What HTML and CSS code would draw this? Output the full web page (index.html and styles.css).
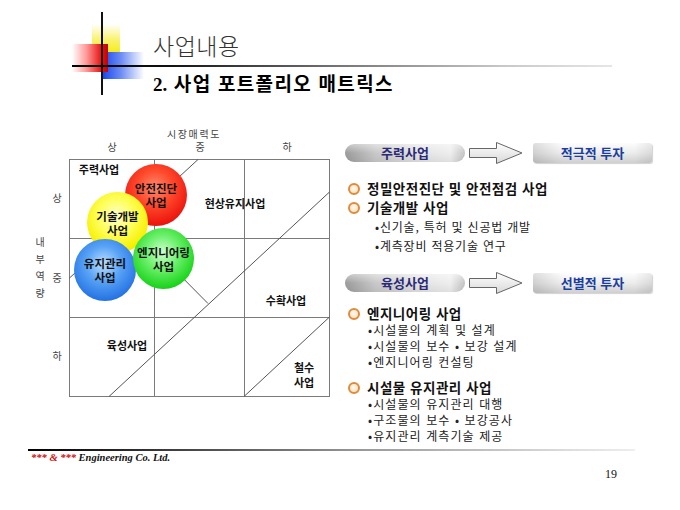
FILE: index.html
```html
<!DOCTYPE html>
<html lang="ko">
<head>
<meta charset="utf-8">
<title>사업내용</title>
<link rel="stylesheet" href="styles.css">
</head>
<body>
<div class="slide">
  <header class="head">
    <div class="mark">
      <div class="sq sq-yellow"></div>
      <div class="sq sq-blue"></div>
      <div class="sq sq-red"></div>
      <div class="vline"></div>
    </div>
    <h1 class="title">사업내용</h1>
    <div class="rule"></div>
    <h2 class="subtitle"><span class="num">2.</span> 사업 포트폴리오 매트릭스</h2>
  </header>

  <main class="content">
    <section class="matrix">
      <svg class="grid" width="340" height="290" viewBox="0 0 340 290">
        <g stroke="#7a7a7a" stroke-width="1" fill="none">
          <rect x="69.5" y="39.5" width="260" height="237"/>
          <line x1="154.5" y1="39.5" x2="154.5" y2="276.5"/>
          <line x1="244.5" y1="39.5" x2="244.5" y2="276.5"/>
          <line x1="69.5" y1="118.5" x2="329.5" y2="118.5"/>
          <line x1="69.5" y1="197.5" x2="329.5" y2="197.5"/>
        </g>
        <g stroke="#555" stroke-width="1" fill="none">
          <line x1="198" y1="39.5" x2="69.5" y2="158"/>
          <line x1="109" y1="276.5" x2="329.5" y2="72"/>
          <line x1="244" y1="276.5" x2="329.5" y2="197"/>
          <line x1="208" y1="183.5" x2="160" y2="135"/>
        </g>
      </svg>

      <div class="lbl ax-title">시장매력도</div>
      <div class="lbl ax ax-hi">상</div>
      <div class="lbl ax ax-mid">중</div>
      <div class="lbl ax ax-lo">하</div>
      <div class="lbl ax ay-hi">상</div>
      <div class="lbl ax ay-mid">중</div>
      <div class="lbl ax ay-lo">하</div>
      <div class="lbl ay-title">내<br>부<br>역<br>량</div>

      <div class="lbl quad q-main">주력사업</div>
      <div class="lbl quad q-hold">현상유지사업</div>
      <div class="lbl quad q-harvest">수확사업</div>
      <div class="lbl quad q-grow">육성사업</div>
      <div class="lbl quad q-exit">철수<br>사업</div>

      <div class="ball ball-red">안전진단<br>사업</div>
      <div class="ball ball-yellow">기술개발<br>사업</div>
      <div class="ball ball-blue">유지관리<br>사업</div>
      <div class="ball ball-green">엔지니어링<br>사업</div>
    </section>

    <section class="panel">
      <div class="action">
        <div class="pill">주력사업</div>
        <svg class="arrow" width="56" height="24" viewBox="0 0 56 24">
          <defs>
            <linearGradient id="ag1" x1="0" y1="0" x2="0" y2="1">
              <stop offset="0" stop-color="#ffffff"/>
              <stop offset="1" stop-color="#d8d8d8"/>
            </linearGradient>
          </defs>
          <polygon points="1.5,7.5 28.5,7.5 28.5,1.5 54,12 28.5,22.5 28.5,16.5 1.5,16.5" fill="url(#ag1)" stroke="#666" stroke-width="1"/>
        </svg>
        <div class="target">적극적 투자</div>
      </div>
      <ul class="group g1">
        <li class="item"><span class="dot"></span>정밀안전진단 및 안전점검 사업</li>
        <li class="item"><span class="dot"></span>기술개발 사업</li>
        <li class="sub">•신기술, 특허 및 신공법 개발</li>
        <li class="sub">•계측장비 적용기술 연구</li>
      </ul>

      <div class="action action-2">
        <div class="pill">육성사업</div>
        <svg class="arrow" width="56" height="24" viewBox="0 0 56 24">
          <defs>
            <linearGradient id="ag2" x1="0" y1="0" x2="0" y2="1">
              <stop offset="0" stop-color="#ffffff"/>
              <stop offset="1" stop-color="#d8d8d8"/>
            </linearGradient>
          </defs>
          <polygon points="1.5,7.5 28.5,7.5 28.5,1.5 54,12 28.5,22.5 28.5,16.5 1.5,16.5" fill="url(#ag2)" stroke="#666" stroke-width="1"/>
        </svg>
        <div class="target">선별적 투자</div>
      </div>
      <ul class="group g2">
        <li class="item"><span class="dot"></span>엔지니어링 사업</li>
        <li class="sub">•시설물의 계획 및 설계</li>
        <li class="sub">•시설물의 보수 • 보강 설계</li>
        <li class="sub">•엔지니어링 컨설팅</li>
        <li class="item item-gap"><span class="dot"></span>시설물 유지관리 사업</li>
        <li class="sub">•시설물의 유지관리 대행</li>
        <li class="sub">•구조물의 보수 • 보강공사</li>
        <li class="sub">•유지관리 계측기술 제공</li>
      </ul>
    </section>
  </main>

  <footer class="foot">
    <div class="foot-rule"></div>
    <div class="foot-text"><span class="red">*** &amp; ***</span> Engineering Co. Ltd.</div>
    <div class="page-num">19</div>
  </footer>
</div>
</body>
</html>
```

FILE: styles.css
```css
* { box-sizing: border-box; }
html, body { margin: 0; padding: 0; background: #fff; }
body {
  font-family: "Noto Sans CJK KR", "Noto Sans", sans-serif;
  color: #111;
}
.slide { width: 680px; height: 510px; position: relative; overflow: hidden; background: #fff; }

/* header */
.head { position: relative; height: 120px; padding-top: 32px; }
.mark { position: absolute; left: 0; top: 0; width: 150px; height: 100px; }
.sq { position: absolute; }
.sq-yellow {
  left: 92px; top: 24px; width: 28px; height: 28px;
  background: linear-gradient(to top, #f4ec1e 0%, #f9f370 45%, rgba(255,255,255,0) 100%);
}
.sq-blue {
  left: 103px; top: 52px; width: 41px; height: 27px;
  background: linear-gradient(to right, #1c48ee 0%, #6f8ff4 45%, rgba(255,255,255,0) 100%);
}
.sq-red {
  left: 72px; top: 44px; width: 36px; height: 28px;
  background: linear-gradient(to right, rgba(255,255,255,0) 0%, #f99 40%, #e81818 80%, #c40000 100%);
}
.vline { position: absolute; left: 101px; top: 12px; width: 2px; height: 83px; background: #111; }
.title {
  position: relative; margin: 0 0 0 153px;
  font-size: 23px; line-height: 27px; font-weight: 300; color: #333; letter-spacing: 0.5px;
}
.rule {
  position: relative; margin: 6px 0 0 72px; width: 540px; height: 2px;
  background: linear-gradient(to right, #000 0%, #111 18%, #777 50%, #c8c8c8 80%, #e6e6e6 100%);
}
.subtitle {
  position: relative; margin: 5px 0 0 153px;
  font-size: 19px; line-height: 22px; font-weight: 700; color: #000; letter-spacing: 1.3px;
}
.num { font-family: "Liberation Serif", serif; letter-spacing: 0; }

/* content */
.content { display: flex; height: 329px; }
.matrix { position: relative; width: 340px; height: 290px; flex: none; }
.grid { position: absolute; left: 0; top: 0; }

.lbl { position: absolute; transform: translate(-50%, -50%); white-space: nowrap; text-align: center; }
.ax { font-size: 10px; line-height: 11px; color: #444; }
.ax-title { left: 194px; top: 13px; font-size: 10px; line-height: 11px; color: #444; letter-spacing: 1.6px; }
.ax-hi { left: 112px; top: 26px; }
.ax-mid { left: 200px; top: 26px; }
.ax-lo { left: 287px; top: 26px; }
.ay-hi { left: 57px; top: 77px; }
.ay-mid { left: 57px; top: 157px; }
.ay-lo { left: 57px; top: 235px; }
.ay-title { left: 40px; top: 147px; font-size: 10px; line-height: 17px; color: #444; }

.quad { font-size: 11px; line-height: 15px; font-weight: 700; color: #111; }
.q-main { left: 99px; top: 49px; }
.q-hold { left: 235px; top: 83px; }
.q-harvest { left: 286px; top: 180px; }
.q-grow { left: 127px; top: 225px; }
.q-exit { left: 304px; top: 255px; }

.ball {
  position: absolute; border-radius: 50%;
  display: flex; align-items: center; justify-content: center; text-align: center;
  font-size: 11.5px; line-height: 14px; font-weight: 700; color: #111; white-space: nowrap;
}
.ball-red {
  left: 125px; top: 44px; width: 62px; height: 62px;
  background: radial-gradient(circle at 48% 38%, #ff8a70 0%, #ff4a2c 35%, #ee1a10 70%, #c80000 100%);
}
.ball-yellow {
  left: 87px; top: 72px; width: 61px; height: 61px;
  background: radial-gradient(circle at 48% 40%, #ffffd0 0%, #ffff60 35%, #f6f000 70%, #d8cc00 100%);
}
.ball-blue {
  left: 74px; top: 119px; width: 62px; height: 62px;
  background: radial-gradient(circle at 48% 40%, #bfe0ff 0%, #5aa4f6 35%, #2a78e6 70%, #1050c8 100%);
}
.ball-green {
  left: 133px; top: 108px; width: 61px; height: 61px;
  background: radial-gradient(circle at 48% 40%, #d0ffd0 0%, #6cf06c 35%, #22d622 70%, #00a800 100%);
}

/* right panel */
.panel { width: 340px; padding: 23px 0 0 5px; }
.action { display: flex; align-items: center; height: 20px; }
.action-2 { margin-top: 18px; }
.pill {
  width: 120px; height: 18px; border-radius: 9px;
  text-align: center; font-size: 13px; line-height: 18px; font-weight: 700; color: #2a2a78;
  background:
    linear-gradient(to bottom, rgba(255,255,255,0.45) 0%, rgba(255,255,255,0) 50%, rgba(0,0,0,0.06) 100%),
    linear-gradient(to right, #9c9c9c 0%, #c8c8c8 25%, #e2e2e2 60%, #eeeeee 88%, #c4c4c4 100%);
}
.arrow { margin-left: 3px; flex: none; }
.target {
  margin-left: 9px; width: 119px; height: 20px; border-radius: 3px;
  text-align: center; font-size: 13px; line-height: 20px; font-weight: 700; color: #1a3ea0;
  background:
    linear-gradient(to right, rgba(0,0,0,0.12) 0%, rgba(0,0,0,0) 25%, rgba(0,0,0,0) 85%, rgba(0,0,0,0.08) 100%),
    linear-gradient(to bottom, #fdfdfd 0%, #ececec 50%, #cfcfcf 100%);
  box-shadow: 1px 1px 1px rgba(0,0,0,0.18);
}

.group { list-style: none; margin: 0; padding: 0; }
.g1 { margin-top: 16px; line-height: 19px; }
.g2 { margin-top: 12px; line-height: 15px; }
.item {
  display: flex; align-items: center;
  font-size: 13.5px; font-weight: 700; color: #111; letter-spacing: 0.5px;
}
.g2 .item { line-height: 17px; }
.item-gap { margin-top: 9px; }
.dot {
  flex: none; width: 12px; height: 12px; margin: 0 7px 0 3px; border-radius: 50%;
  border: 2px solid #e08a3c;
  background: radial-gradient(circle at 45% 40%, #fffaf2 0%, #fde4c4 70%, #f3c088 100%);
}
.sub { font-size: 12px; color: #222; }
.g1 .sub { padding-left: 30px; letter-spacing: 0.8px; }
.g2 .sub { padding-left: 23px; letter-spacing: 1.1px; line-height: 16px; }

/* footer */
.foot-rule {
  margin-left: 28px; width: 607px; height: 2px;
  background: linear-gradient(to right, #000 0%, #333 20%, #999 55%, #dedede 90%, #eee 100%);
}
.foot-text {
  margin: 1px 0 0 31px;
  font-family: "Liberation Serif", serif; font-style: italic; font-weight: 700;
  font-size: 10.5px; line-height: 12px; color: #111;
}
.foot-text .red { color: #d01010; }
.page-num {
  margin: 3px 63px 0 0; text-align: right;
  font-family: "Liberation Serif", serif; font-size: 12px; line-height: 14px; color: #111;
}
```
